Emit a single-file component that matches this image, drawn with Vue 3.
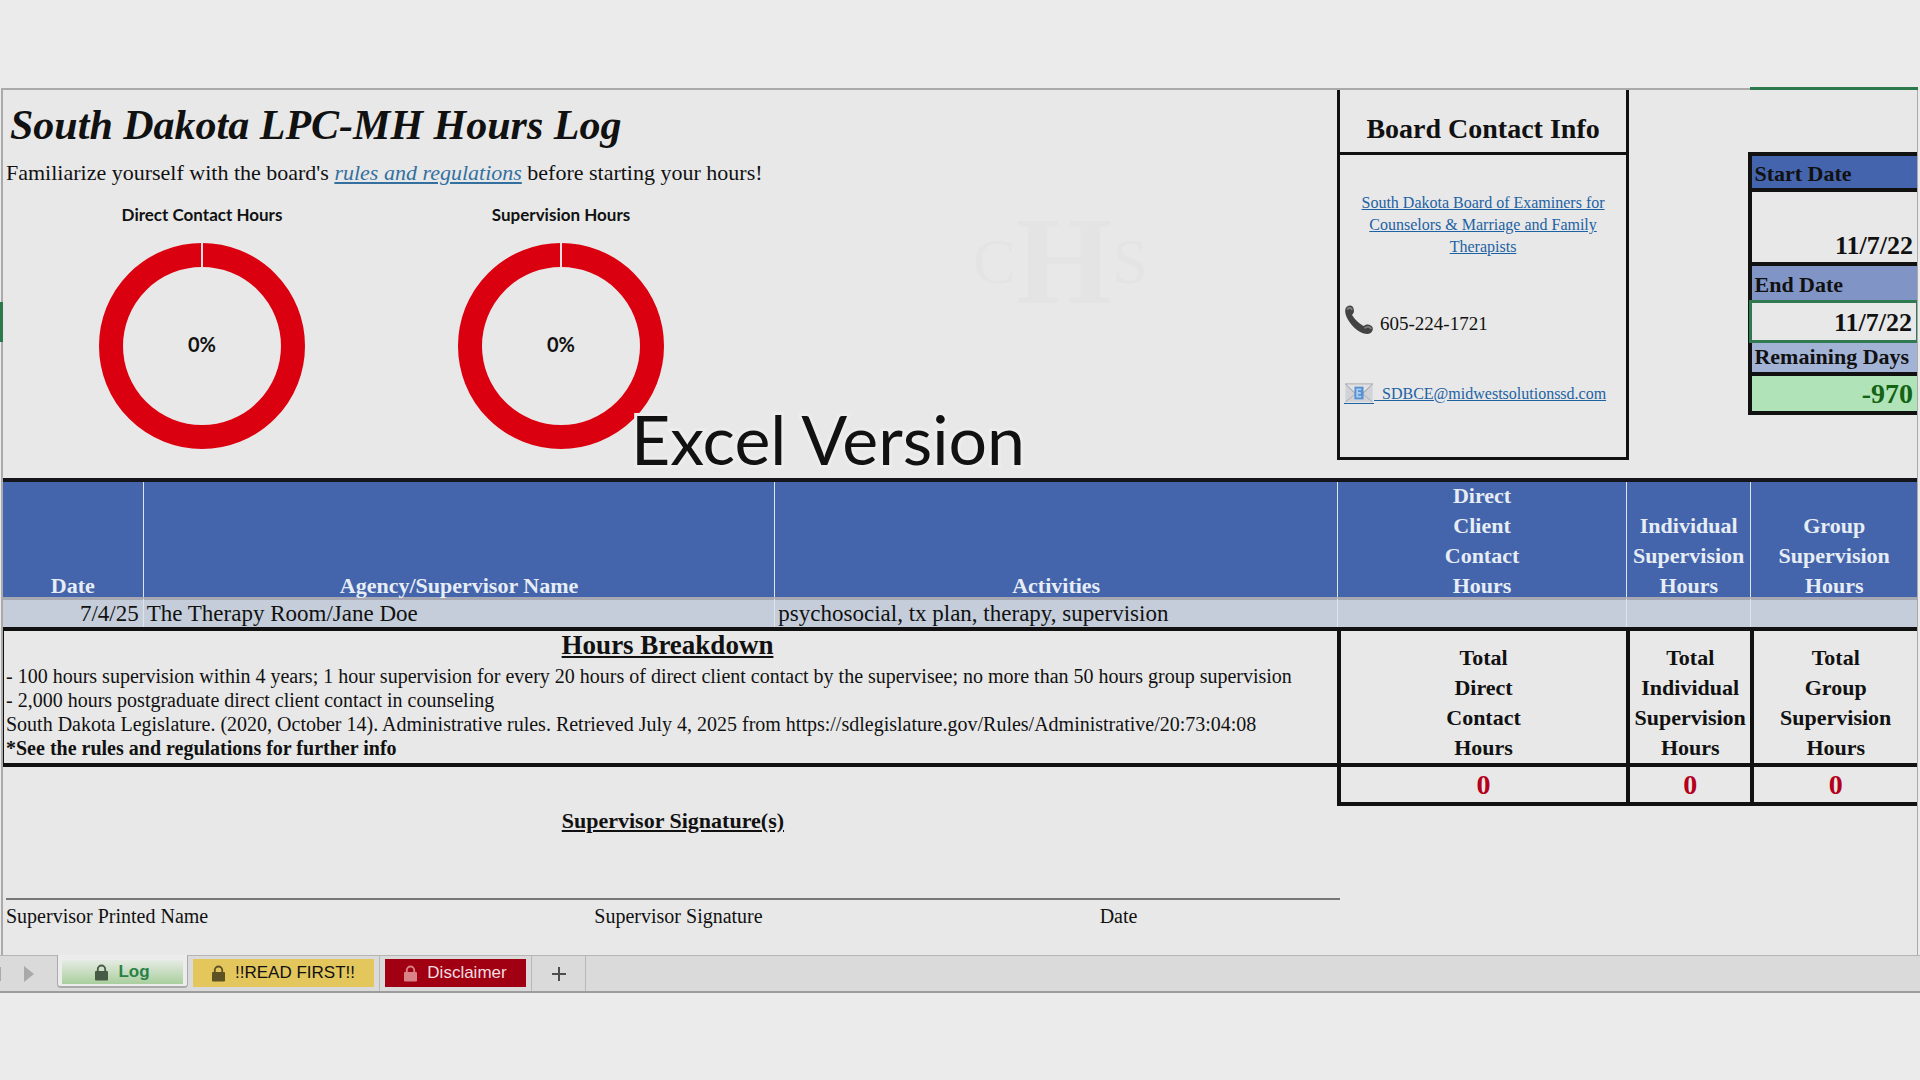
<script setup>
import { ref } from 'vue'

const charts = [
  { title: 'Direct Contact Hours', value: '0%' },
  { title: 'Supervision Hours', value: '0%' },
]

const hourColumns = [
  { head: ['Direct', 'Client', 'Contact', 'Hours'], total: ['Total', 'Direct', 'Contact', 'Hours'], value: 0 },
  { head: ['Individual', 'Supervision', 'Hours'], total: ['Total', 'Individual', 'Supervision', 'Hours'], value: 0 },
  { head: ['Group', 'Supervision', 'Hours'], total: ['Total', 'Group', 'Supervision', 'Hours'], value: 0 },
]

const tabs = [
  { id: 'log', label: 'Log' },
  { id: 'read', label: '!!READ FIRST!!' },
  { id: 'disclaimer', label: 'Disclaimer' },
]
const activeTab = ref('log')
</script>

<template>
  <main class="page">
    <div class="sheet">
      <section class="top">
        <div class="intro">
          <h1>South Dakota LPC-MH Hours Log</h1>
          <p class="lead">
            Familiarize yourself with the board's <a href="#rules">rules and regulations</a> before starting your hours!
          </p>
          <div class="charts">
            <figure v-for="c in charts" :key="c.title" class="chart">
              <figcaption>{{ c.title }}</figcaption>
              <div class="ring">
                <svg viewBox="0 0 206 206" aria-hidden="true">
                  <circle cx="103" cy="103" r="91" fill="none" stroke="#db0010" stroke-width="24" />
                  <path d="M103 0V25" stroke="#f3dfe0" stroke-width="2" />
                </svg>
                <span>{{ c.value }}</span>
              </div>
            </figure>
          </div>
          <div class="watermark"><span>C</span><b>H</b><span>S</span></div>
          <div class="caption">Excel Version</div>
        </div>

        <aside class="contact">
          <h2>Board Contact Info</h2>
          <a class="board" href="#board">South Dakota Board of Examiners for Counselors &amp; Marriage and Family Therapists</a>
          <p class="phone">
            <svg viewBox="0 0 32 32" aria-hidden="true">
              <path d="M2 3C5-1 10 0 10.500 5C11 8 10 9 8.500 10.500C11 15 16 20 21 22.500C23 20.500 26 20 29 22C32 24 31 28 28 30C24 32.500 15 29 8.500 21.500C2 14 0 7 2 3Z" fill="#434343" />
              <path d="M3.500 5C5 2 8 2.500 8.500 5.500M22 25C24 22.500 28 23 29 25.500" fill="none" stroke="#808080" stroke-width="2" />
            </svg>
            605-224-1721
          </p>
          <a class="email" href="mailto:SDBCE@midwestsolutionssd.com">
            <svg viewBox="0 0 32 22" aria-hidden="true">
              <path d="M1 1H31V21H1Z" fill="#d2d3d8" />
              <path d="M1 1L12 12L1 21M31 1L20 12L31 21" fill="none" stroke="#aaabb2" stroke-width="1" />
              <path d="M1 1L16 15L31 1Z" fill="#e2e2e5" stroke="#a6a7ac" stroke-width="1" />
              <path d="M11 4H21V18H11Z" fill="#5691d4" />
              <path d="M18.500 7H14V15H18.500M14 11H18" fill="none" stroke="#a9cdf0" stroke-width="2" />
            </svg><span>&nbsp; SDBCE@midwestsolutionssd.com</span>
          </a>
        </aside>

        <dl class="dates">
          <dt class="start">Start Date</dt>
          <dd class="tall">11/7/22</dd>
          <dt class="end">End Date</dt>
          <dd class="selected">11/7/22</dd>
          <dt class="remaining">Remaining Days</dt>
          <dd class="days">-970</dd>
        </dl>
      </section>

      <table class="log">
        <colgroup>
          <col class="c-date" /><col class="c-agency" /><col class="c-act" />
          <col class="c-direct" /><col class="c-ind" /><col class="c-group" />
        </colgroup>
        <thead>
          <tr>
            <th>Date</th>
            <th>Agency/Supervisor Name</th>
            <th>Activities</th>
            <th v-for="(c, i) in hourColumns" :key="i">
              <div class="stack"><div v-for="l in c.head" :key="l">{{ l }}</div></div>
            </th>
          </tr>
        </thead>
        <tbody>
          <tr class="entry">
            <td class="num">7/4/25</td>
            <td>The Therapy Room/Jane Doe</td>
            <td>psychosocial, tx plan, therapy, supervision</td>
            <td></td><td></td><td></td>
          </tr>
          <tr class="totals">
            <td class="breakdown" colspan="3">
              <h2>Hours Breakdown</h2>
              <p>- 100 hours supervision within 4 years; 1 hour supervision for every 20 hours of direct client contact by the supervisee; no more than 50 hours group supervision</p>
              <p>- 2,000 hours postgraduate direct client contact in counseling</p>
              <p>South Dakota Legislature. (2020, October 14). Administrative rules. Retrieved July 4, 2025 from https://sdlegislature.gov/Rules/Administrative/20:73:04:08</p>
              <p><b>*See the rules and regulations for further info</b></p>
            </td>
            <th v-for="(c, i) in hourColumns" :key="i">
              <div v-for="l in c.total" :key="l">{{ l }}</div>
            </th>
          </tr>
          <tr class="sums">
            <td class="blank" colspan="3"></td>
            <td v-for="(c, i) in hourColumns" :key="i">{{ c.value }}</td>
          </tr>
        </tbody>
      </table>

      <section class="signatures">
        <h3>Supervisor Signature(s)</h3>
        <div class="sign-labels">
          <span>Supervisor Printed Name</span>
          <span>Supervisor Signature</span>
          <span>Date</span>
        </div>
      </section>
    </div>

    <nav class="tabs">
      <button class="arrow" aria-label="Next sheet">
        <svg viewBox="0 0 34 18" aria-hidden="true"><path d="M0 2H1V16H0Z" fill="#aaa" /><path d="M24 1L34 9L24 17Z" fill="#a9a9a9" /></svg>
      </button>
      <button v-for="t in tabs" :key="t.id" class="tab" :class="[t.id, { active: activeTab === t.id }]" @click="activeTab = t.id">
        <span class="fill">
          <svg viewBox="0 0 14 17" aria-hidden="true">
            <path d="M3 8V5A4 4 0 0 1 11 5V8" fill="none" stroke="currentColor" stroke-width="2" />
            <rect x="0" y="7" width="14" height="10" rx="1" fill="currentColor" />
          </svg>
          {{ t.label }}
        </span>
      </button>
      <button class="add" aria-label="Add sheet">
        <svg viewBox="0 0 14 14" aria-hidden="true"><path d="M7 0V14M0 7H14" stroke="#4d4d4d" stroke-width="2" /></svg>
      </button>
    </nav>
  </main>
</template>

<style>
body {
  margin: 0;
  background: #ebebeb;
}
</style>

<style scoped>
* {
  box-sizing: border-box;
}
.page {
  padding-top: 88px;
  font-family: "Liberation Serif", serif;
  color: #111;
}
h1, h2, h3, p, dl, dd, figure {
  margin: 0;
}
a {
  color: #1d62a3;
}
.sheet {
  position: relative;
  margin: 0 2px 0 1px;
  border: solid #aaa;
  border-width: 2px 1px 0 2px;
  background: #e8e8e8;
}
/* row selection marker on the sheet's edge */
.sheet::before {
  content: "";
  position: absolute;
  left: -3px;
  top: 212px;
  width: 3px;
  height: 40px;
  background: #2c7a4b;
}

/* upper area */
.top {
  display: grid;
  grid-template-columns: 697fr 151fr 65fr 87fr;
  height: 388px;
}
.top > * {
  min-width: 0;
}
.intro {
  position: relative;
  padding: 7px 0 0 3px;
}
h1 {
  padding-left: 4px;
  font-size: 42px;
  line-height: 56px;
  font-style: italic;
}
.lead {
  font-size: 22px;
  line-height: 40px;
  white-space: nowrap;
}
.lead a {
  font-style: italic;
  color: #33709f;
}
.charts {
  display: flex;
  padding-left: 93px;
  gap: 153px;
}
.chart {
  width: 206px;
}
figcaption {
  font: bold 17px/24px Lato, sans-serif;
  padding: 10px 0 16px;
  text-align: center;
}
.ring {
  display: grid;
  place-items: center;
}
.ring > * {
  grid-area: 1 / 1;
}
.ring svg {
  display: block;
  width: 206px;
  height: 206px;
}
.ring span {
  font: bold 20px/24px Lato, sans-serif;
  padding-bottom: 4px;
}
.watermark {
  position: absolute;
  left: 970px;
  top: 122px;
  display: flex;
  align-items: center;
  color: #e4e4e4;
  line-height: 100px;
}
.watermark span {
  font: 64px/100px "Liberation Serif", serif;
}
.watermark b {
  font-size: 124px;
}
.caption {
  position: absolute;
  left: 628px;
  top: 304px;
  font: 68px/90px Lato, sans-serif;
  white-space: nowrap;
  -webkit-text-stroke: 6px #ececec;
  paint-order: stroke fill;
}
.contact {
  height: 370px;
  margin-right: -3px;
  border: 3px solid #111;
  border-top: 0;
  display: flex;
  flex-direction: column;
}
.contact h2 {
  border-bottom: 3px solid #111;
  padding-top: 21px;
  height: 65px;
  font-size: 28px;
  line-height: 36px;
  text-align: center;
}
.board {
  margin-top: 37px;
  padding: 0 16px;
  font-size: 16px;
  line-height: 22px;
  text-align: center;
}
.phone, .email {
  display: flex;
  padding-left: 4px;
  font-size: 19px;
  line-height: 24px;
}
.phone {
  margin-top: 42px;
  gap: 6px;
  align-items: flex-end;
  height: 36px;
}
.phone svg {
  width: 30px;
  height: 32px;
}
.email {
  margin-top: 46px;
  align-items: flex-end;
  font-size: 16px;
}
.email svg {
  width: 30px;
  height: 21px;
  border-bottom: 1px solid #1d62a3;
  margin-bottom: 2px;
}
.dates {
  grid-column: 4;
  margin-top: 62px;
  margin-left: -2px;
  border-left: 4px solid #111;
  align-self: start;
  font-size: 22px;
  font-weight: bold;
  position: relative;
}
.dates::before {
  content: "";
  position: absolute;
  left: -2px;
  right: -1px;
  top: -65px;
  height: 3px;
  background: #2c7a4b;
}
.dates dt, .dates dd {
  border-top: 4px solid #111;
  padding: 0 4px 0 2px;
  white-space: nowrap;
}
.dates dd {
  text-align: right;
  font-size: 26px;
}
.dates .start {
  height: 36px;
  line-height: 36px;
  background: #4464ad;
}
.dates .tall {
  height: 74px;
  padding-top: 40px;
  line-height: 28px;
}
.dates .end {
  height: 38px;
  line-height: 38px;
  background: #8095c6;
}
.dates .selected {
  height: 43px;
  margin-left: -3px;
  border: 3px solid #2f7a50;
  border-right-width: 1px;
  line-height: 40px;
  background: #e8e8e8;
}
.dates .remaining {
  border-top: 0;
  height: 29px;
  line-height: 28px;
  background: #a3b3d6;
}
.dates .days {
  height: 43px;
  border-bottom: 4px solid #111;
  font-size: 28px;
  line-height: 36px;
  color: #146314;
  background: #b1e3b9;
}

/* log table */
.log {
  width: 100%;
  table-layout: fixed;
  border-collapse: separate;
  border-spacing: 0;
  border-top: 4px solid #14161c;
}
.c-date { width: 7.3%; }
.c-agency { width: 33%; }
.c-act { width: 29.4%; }
.c-direct { width: 15.1%; }
.c-ind { width: 6.5%; }
.c-group { width: 8.7%; }
.log th, .log td {
  padding: 0;
}
.log th {
  vertical-align: bottom;
  font-size: 22px;
  line-height: 30px;
}
thead th {
  height: 115px;
  background: #4464ab;
  color: #e6edf5;
}
thead th, .entry td {
  border-left: 1px solid #dce4ee;
}
thead th:first-child, .entry td:first-child {
  border-left: 0;
}
thead th:nth-child(-n + 3) {
  line-height: 22px;
}
.stack {
  margin: -2px 0 -4px;
}
.log .entry td {
  height: 30px;
  border-top: 3px solid #a6a9b4;
  padding: 0 4px 0 3px;
  font-size: 23px;
  line-height: 27px;
  background: #c4cdd9;
  white-space: nowrap;
}
.log .entry .num {
  text-align: right;
}
.totals td, .totals th {
  border-top: 4px solid #111;
  border-left: 4px solid #111;
}
.log .breakdown {
  height: 136px;
  border-left-width: 1px;
  padding: 0 8px 0 2px;
  vertical-align: top;
}
.breakdown h2 {
  margin-bottom: 5px;
  font-size: 27px;
  line-height: 28px;
  text-align: center;
  text-decoration: underline;
}
.breakdown p {
  font-size: 20px;
  line-height: 24px;
  white-space: nowrap;
}
.sums td {
  height: 43px;
  border: solid #111;
  border-width: 4px 0 4px 4px;
  text-align: center;
  font-size: 28px;
  font-weight: bold;
  line-height: 35px;
  color: #b4001c;
}
.sums .blank {
  border-width: 4px 0 0;
}

/* signatures */
.signatures {
  width: 70%;
  height: 149px;
  padding: 1px 3px 0;
}
.signatures h3 {
  font-size: 22px;
  line-height: 28px;
  text-align: center;
  text-decoration: underline;
}
.sign-labels {
  display: grid;
  grid-template-columns: 588fr 505fr 240fr;
  margin-top: 63px;
  padding-top: 4px;
  border-top: 2px solid #777;
  font-size: 20px;
  line-height: 24px;
}

/* sheet tabs */
.tabs {
  display: flex;
  height: 38px;
  border-top: 1px solid #b5b5b5;
  border-bottom: 2px solid #9c9c9c;
  background: #dadada;
}
.tabs button {
  padding: 0;
  border: 0;
  background: none;
  color: #111;
  font: 17px/24px "Liberation Sans", sans-serif;
}
.tabs .arrow {
  width: 57px;
  text-align: left;
}
.tabs svg {
  display: block;
}
.arrow svg {
  width: 34px;
  height: 18px;
}
.tabs .tab {
  padding: 3px 5px 4px;
  border-right: 1px solid #b8b8b8;
}
.fill {
  display: flex;
  align-items: center;
  justify-content: center;
  gap: 10px;
  height: 28px;
}
.fill svg {
  width: 13px;
  height: 17px;
}
.tabs .log {
  width: 131px;
}
.tabs .read {
  width: 192px;
}
.tabs .disclaimer {
  width: 152px;
}
.tabs .active {
  height: 33px;
  margin-top: -1px;
  padding: 5px 4px;
  border: solid #aaa;
  border-width: 0 1px 2px;
  border-radius: 0 0 4px 4px;
  background: #ececec;
}
.log .fill {
  height: 24px;
  background: linear-gradient(#e6ebe4, #a9cf9d);
  color: #2a8147;
  font-weight: bold;
}
.log .fill svg {
  color: #465b45;
}
.read .fill {
  background: #e3c75d;
}
.read .fill svg {
  color: #5d5223;
}
.disclaimer .fill {
  background: #a00012;
  color: #f3dfe0;
}
.disclaimer .fill svg {
  color: #d98287;
}
.tabs .add {
  display: grid;
  place-items: center;
  width: 54px;
  border-right: 1px solid #b8b8b8;
}
.add svg {
  width: 14px;
  height: 14px;
}
</style>
